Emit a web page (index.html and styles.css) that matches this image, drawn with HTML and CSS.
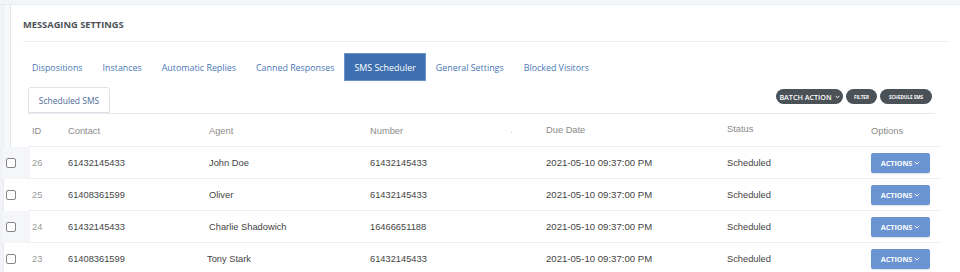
FILE: index.html
```html
<!DOCTYPE html>
<html>
<head>
<meta charset="utf-8">
<link rel="stylesheet" href="styles.css">
</head>
<body>
<div class="topstrip"></div>
<div class="card">
  <div class="title">MESSAGING SETTINGS</div>
  <nav class="tabs">
    <a class="tab">Dispositions</a>
    <a class="tab">Instances</a>
    <a class="tab">Automatic Replies</a>
    <a class="tab">Canned Responses</a>
    <a class="tab active">SMS Scheduler</a>
    <a class="tab">General Settings</a>
    <a class="tab">Blocked Visitors</a>
  </nav>
  <div class="subbar">
    <div class="subtab">Scheduled SMS</div>
    <div class="pills">
      <span class="pill pill-batch">BATCH ACTION <svg class="pchev" width="5" height="4" viewBox="0 0 5 4"><path d="M0.6 0.8 L2.5 2.9 L4.4 0.8" fill="none" stroke="#fff" stroke-width="0.9"/></svg></span>
      <span class="pill pill-small pill-filter">FILTER</span>
      <span class="pill pill-small pill-sched">SCHEDULE SMS</span>
    </div>
  </div>
  <div class="grid">
    <div class="row head">
      <div class="c cb"></div>
      <div class="c">ID</div>
      <div class="c">Contact</div>
      <div class="c">Agent</div>
      <div class="c">Number<span class="dot"></span></div>
      <div class="c up">Due Date</div>
      <div class="c up2">Status</div>
      <div class="c">Options</div>
    </div>
    <div class="row odd">
      <div class="c cb"><span class="box"></span></div>
      <div class="c id">26</div>
      <div class="c">61432145433</div>
      <div class="c">John Doe</div>
      <div class="c">61432145433</div>
      <div class="c date">2021-05-10 09:37:00 PM</div>
      <div class="c">Scheduled</div>
      <div class="c"><span class="act">ACTIONS <svg width="6" height="4" viewBox="0 0 6 4"><path d="M0.8 0.8 L3 3 L5.2 0.8" fill="none" stroke="#fff" stroke-width="1"/></svg></span></div>
    </div>
    <div class="row even">
      <div class="c cb"><span class="box"></span></div>
      <div class="c id">25</div>
      <div class="c">61408361599</div>
      <div class="c">Oliver</div>
      <div class="c">61432145433</div>
      <div class="c date">2021-05-10 09:37:00 PM</div>
      <div class="c">Scheduled</div>
      <div class="c"><span class="act">ACTIONS <svg width="6" height="4" viewBox="0 0 6 4"><path d="M0.8 0.8 L3 3 L5.2 0.8" fill="none" stroke="#fff" stroke-width="1"/></svg></span></div>
    </div>
    <div class="row odd">
      <div class="c cb"><span class="box"></span></div>
      <div class="c id">24</div>
      <div class="c">61432145433</div>
      <div class="c">Charlie Shadowich</div>
      <div class="c">16466651188</div>
      <div class="c date">2021-05-10 09:37:00 PM</div>
      <div class="c">Scheduled</div>
      <div class="c"><span class="act">ACTIONS <svg width="6" height="4" viewBox="0 0 6 4"><path d="M0.8 0.8 L3 3 L5.2 0.8" fill="none" stroke="#fff" stroke-width="1"/></svg></span></div>
    </div>
    <div class="row even">
      <div class="c cb"><span class="box"></span></div>
      <div class="c id">23</div>
      <div class="c">61408361599</div>
      <div class="c shift">Tony Stark</div>
      <div class="c">61432145433</div>
      <div class="c date">2021-05-10 09:37:00 PM</div>
      <div class="c">Scheduled</div>
      <div class="c"><span class="act">ACTIONS <svg width="6" height="4" viewBox="0 0 6 4"><path d="M0.8 0.8 L3 3 L5.2 0.8" fill="none" stroke="#fff" stroke-width="1"/></svg></span></div>
    </div>
  </div>
</div>
</body>
</html>
```
FILE: styles.css
```css
html, body {
  margin: 0;
  padding: 0;
}
body {
  background: linear-gradient(to right, #f1f3f6 0 3px, #e8ebef 3px 4px, #f6f8fa 4px);
  width: 960px;
  height: 272px;
  overflow: hidden;
  font-family: "Open Sans", "Liberation Sans", sans-serif;
}
.topstrip {
  height: 4px;
  border-bottom: 1px solid #e9edf1;
  background: #f3f6f9;
}
.card {
  margin-left: 10px;
  border-left: 1px solid #e4e7eb;
  background: #fff;
  height: 267px;
}
.title {
  margin: 0 10px 0 12px;
  height: 37px;
  padding-top: 4px;
  box-sizing: border-box;
  line-height: 32px;
  border-bottom: 1px solid #eef0f3;
  font-size: 9.3px;
  font-weight: 700;
  color: #4e5358;
}
.tabs {
  display: flex;
  margin-left: 11px;
  padding-top: 11px;
}
.tab {
  display: block;
  padding: 0 10px;
  height: 28px;
  line-height: 29px;
  font-size: 8.9px;
  color: #4a78b6;
  box-sizing: border-box;
}
.tab.active {
  background: #3e70b1;
  border: 1px solid #6b93c9;
  line-height: 27px;
  padding: 0 9px;
  color: #fff;
}
.subbar {
  display: flex;
  justify-content: space-between;
  align-items: flex-start;
  margin: 6px 25px 0 17px;
  height: 26px;
  border-bottom: 1px solid #e6e9ed;
}
.subtab {
  width: 82px;
  height: 26px;
  box-sizing: border-box;
  border: 1px solid #dfe3e8;
  border-radius: 3px 3px 0 0;
  text-align: center;
  line-height: 25px;
  font-size: 8.5px;
  color: #4e6c95;
}
.pills {
  display: flex;
  gap: 3px;
  margin-top: 2px;
  padding-right: 3px;
}
.pill {
  display: flex;
  align-items: center;
  justify-content: center;
  height: 15px;
  border-radius: 8px;
  background: #4a5157;
  color: #fff;
  font-weight: 700;
  box-sizing: border-box;
}
.pill-batch {
  width: 67px;
  font-size: 7.2px;
  font-weight: 600;
  gap: 3px;
}
.pill-small {
  font-size: 4.6px;
}
.pill-filter { width: 31px; }
.pill-sched { width: 52px; }
.grid {
  margin-left: -11px;
  margin-top: 1px;
  font-family: "Liberation Sans", Arial, sans-serif;
  font-size: 9.3px;
  color: #444;
}
.row {
  display: grid;
  grid-template-columns: 28px 40px 141px 161px 176px 181px 144px 71px;
  height: 32px;
}
.c {
  display: flex;
  align-items: center;
  border-bottom: 1px solid #eef0f2;
  box-sizing: border-box;
  white-space: nowrap;
}
.c:nth-child(2) {
  padding-left: 4px;
}
.c.cb {
  border-bottom: none;
}
.c.date {
  font-size: 9.6px;
}
.head .c {
  color: #8a8a8a;
}
.head .c.up { padding-bottom: 2px; }
.head .c.up2 { padding-bottom: 3px; }
.head .c.cb {
  background: linear-gradient(to right, #f1f3f6 0 3px, #e8ebef 3px 4px, #f6f8fa 4px 10px, #e4e7eb 10px 11px, #fff 11px);
}
.odd .c.cb {
  background: linear-gradient(to right, #f1f3f6 0 3px, #f4f6f9 3px);
  width: 30px;
}
.even .c.cb {
  background: linear-gradient(to right, #f1f3f6 0 3px, #e8ebef 3px 4px, #fff 4px);
}
.dot {
  width: 1px;
  height: 1px;
  background: #c8c8c8;
  margin-left: auto;
  margin-right: 34px;
  margin-top: 4px;
}
.box {
  display: block;
  width: 10px;
  height: 10px;
  box-sizing: border-box;
  border: 1px solid #858585;
  border-radius: 2px;
  background: #fff;
  margin-left: 6px;
}
.id {
  color: #9a9a9a;
}
.shift {
  margin-left: -2px;
}
.act {
  display: flex;
  align-items: center;
  justify-content: center;
  gap: 2px;
  width: 59px;
  height: 20px;
  background: #6a94d2;
  border-radius: 2px;
  box-shadow: 0 1px 1px rgba(0,0,0,0.12);
  color: #fff;
  font-family: "Open Sans", sans-serif;
  font-weight: 700;
  font-size: 7.2px;
}
```
